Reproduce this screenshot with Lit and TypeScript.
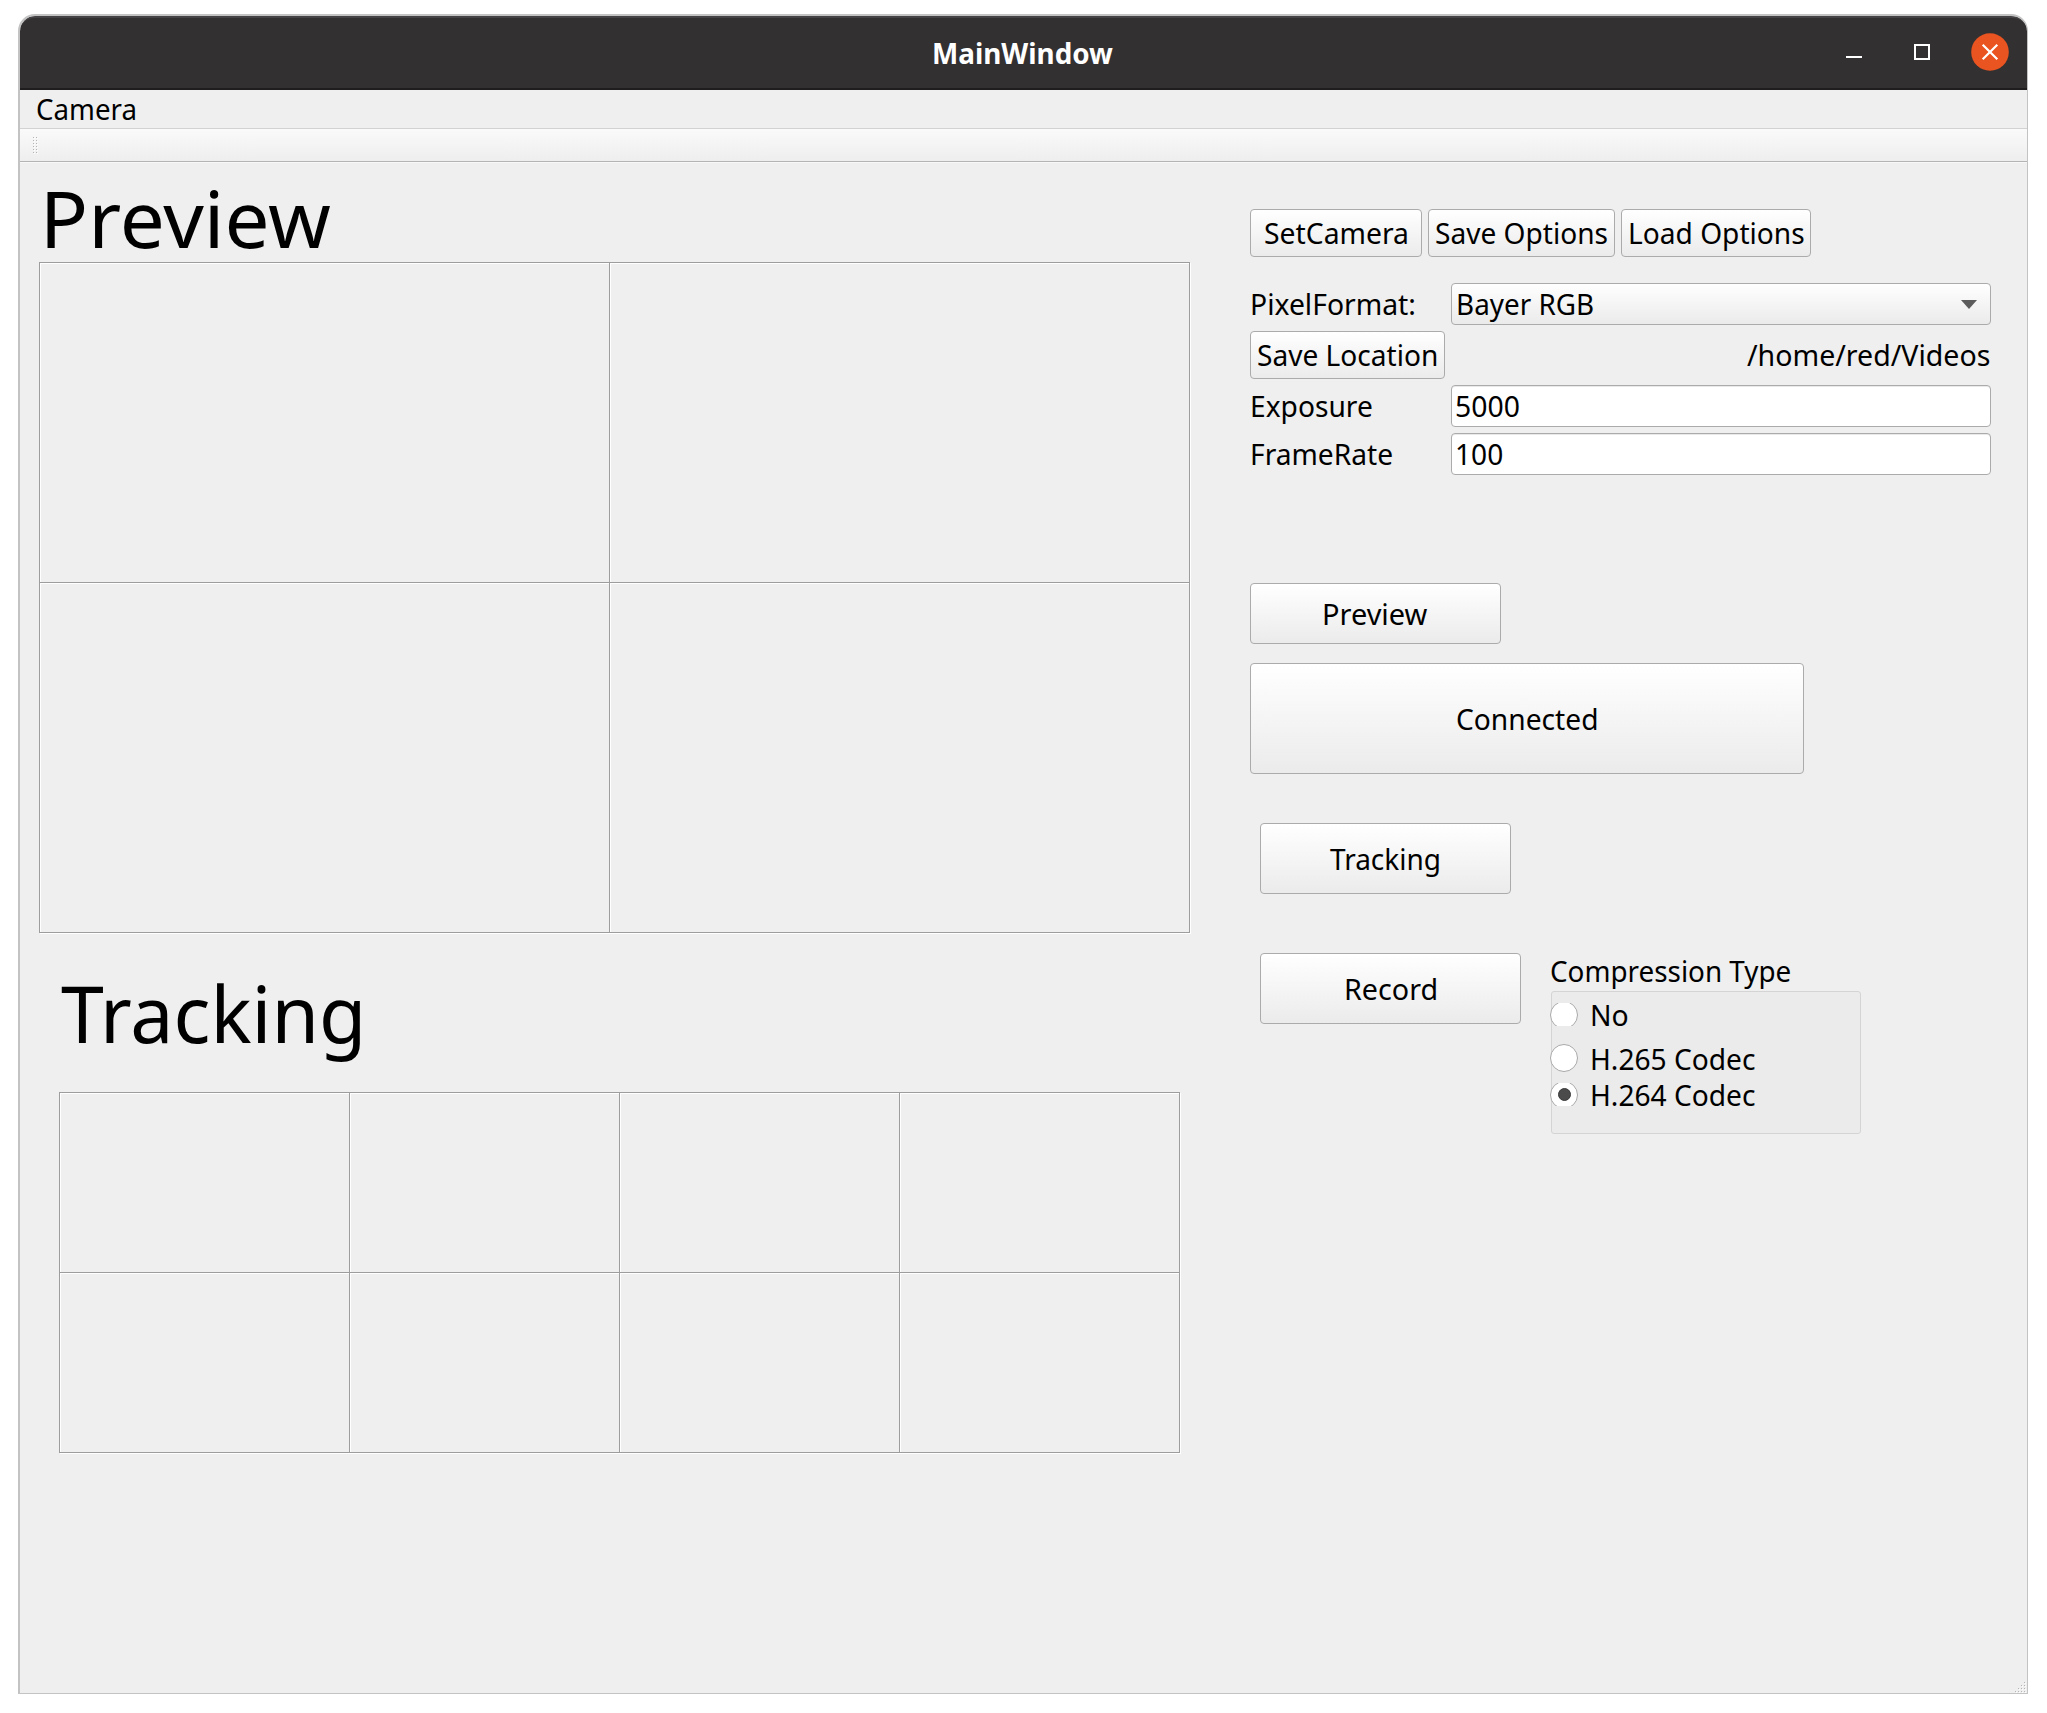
import { LitElement, html, css, svg } from "lit";
import { customElement, property } from "lit/decorators.js";
import { styleMap } from "lit/directives/style-map.js";

const FAMILY = '"Noto Sans", "Open Sans", sans-serif';
const pen = document.createElement("canvas").getContext("2d")!;

/** A single line of text whose inked area is condensed or widened to a given width. */
@customElement("fit-label")
class FitLabel extends LitElement {
  @property() text = "";
  @property({ type: Number }) ink = 0;
  @property({ type: Number }) size = 28.5;
  @property({ type: Number }) weight = 400;
  @property({ type: Number }) drop = 1;

  static styles = css`
    :host { display: inline-block; white-space: pre; flex: none; }
    .box { display: block; line-height: 1.3; font-family: "Noto Sans", "Open Sans", sans-serif; }
    .run { display: inline-block; transform-origin: 0 50%; }
  `;

  render() {
    pen.font = `${this.weight} ${this.size}px ${FAMILY}`;
    const m = pen.measureText(this.text);
    const scale = this.ink / (m.actualBoundingBoxRight + m.actualBoundingBoxLeft);
    const shift = m.actualBoundingBoxLeft * scale;
    return html`<span class="box" style=${styleMap({
      width: `${this.ink}px`,
      fontSize: `${this.size}px`,
      fontWeight: String(this.weight),
    })}><span class="run" style=${styleMap({
      transform: `translate(${shift}px, ${this.drop}px) scaleX(${scale})`,
    })}>${this.text}</span></span>`;
  }
}

const dots = (points: number[][]) =>
  points.map(([x, y]) => svg`<rect x=${x + 1} y=${y + 1} width="1" height="1" fill="#fff"/><rect x=${x} y=${y} width="1" height="1" fill="#b4b4b4"/>`);

const HANDLE = [0, 3, 6, 9, 12, 15].flatMap((y) => [[0, y], [3, y]]);
const GRIP = [[9, 0], [6, 3], [9, 3], [3, 6], [6, 6], [9, 6], [0, 9], [3, 9], [6, 9], [9, 9]];

@customElement("app-root")
class AppRoot extends LitElement {
  static styles = css`
    :host { display: block; box-sizing: border-box; width: 2047px; height: 1713px; padding: 14px 19px 19px 18px; background: #fff; color: #000; overflow: hidden; }
    * { box-sizing: border-box; }
    svg { display: block; flex: none; }
    .window { display: flex; flex-direction: column; height: 1680px; background: #efefef; border: solid #c3c3c3; border-width: 2px 1px 1px 2px; border-radius: 17px 17px 0 0; overflow: hidden; }
    .title { height: 74px; flex: none; display: grid; grid-template-columns: 1fr auto 1fr; align-items: center; background: #333031; border-top: 2px solid #444244; border-bottom: 2px solid #201d1f; color: #fff; border-radius: 15px 15px 0 0; }
    .name { grid-column: 2; padding-top: 1px; }
    .controls { display: flex; justify-content: flex-end; align-items: center; height: 38px; padding-right: 18px; margin-bottom: 2px; }
    .menu { height: 38px; flex: none; display: flex; align-items: center; padding-left: 17px; }
    .toolbar { height: 34px; flex: none; border-top: 1px solid #d2d2d2; border-bottom: 1px solid #b4b4b4; background: linear-gradient(#fafafa, #eee); padding: 8px 0 0 13px; }
    .body { flex: 1; min-height: 0; display: grid; grid-template-columns: 1230px 1fr; box-shadow: inset 0 1px #f8f8f8; }
    .left { padding-left: 19px; }
    .heading { display: flex; align-items: center; height: 100px; }
    .heading.one { margin: 5.5px 0 -5.5px 0; padding-left: 7.5px; }
    .heading.two { margin-top: 30px; height: 100px; padding-left: 22px; }
    .views { display: grid; width: max-content; border: solid #9d9d9d; border-width: 0 1px 1px 0; box-shadow: 1px 1px #fff; }
    .cell { border: solid #9d9d9d; border-width: 1px 0 0 1px; box-shadow: inset 1px 1px #fff; }
    .views.preview { grid-template: 320px 350px / 570px 580px; }
    .views.tracking { grid-template: 180px 180px / 290px 270px 280px 280px; margin: 29px 0 0 20px; }
    .right { padding-top: 47px; display: flex; flex-direction: column; align-items: flex-start; }
    .row { display: flex; gap: 6px; }
    .btn { appearance: none; margin: 0; padding: 0; height: 48px; flex: none; display: flex; align-items: center; justify-content: center; border: 1px solid #ababab; border-radius: 4px; background: linear-gradient(#fff, #ebebeb); color: #000; }
    .w172 { width: 172px; }
    .w187 { width: 187px; }
    .w190 { width: 190px; padding-left: 1px; }
    .w195 { width: 195px; }
    .form { display: grid; grid-template: 42px 48px 42px 42px / 195px 540px; gap: 6px; align-items: center; margin-top: 26px; }
    .lbl { padding-left: 2px; display: flex; }
    .path { display: flex; justify-content: flex-end; padding-right: 1px; }
    .field { height: 42px; display: flex; align-items: center; border: 1px solid #ababab; border-radius: 4px; background: #fff; padding-left: 4px; box-shadow: inset 0 1px #e9e9e9; }
    .field.rate { padding-left: 5px; }
    .combo { justify-content: space-between; background: linear-gradient(#fff, #ebebeb); padding: 0 13px 0 6px; box-shadow: none; }
    .go { width: 251px; height: 61px; margin-top: 108px; }
    .state { width: 554px; height: 111px; margin-top: 19px; }
    .track { width: 251px; height: 71px; margin: 49px 0 0 10px; padding-right: 1px; }
    .bottom { display: flex; margin: 59px 0 0 10px; }
    .rec { width: 261px; height: 71px; padding-left: 1px; }
    .codec { margin-left: 30px; }
    .caption { display: flex; align-items: center; height: 38px; }
    .frame { width: 310px; height: 143px; border: 1px solid #d4d4d4; border-radius: 3px; background: #ebebeb; padding-top: 11px; }
    .opt { display: flex; align-items: center; gap: 14px; height: 23px; margin-left: -2px; }
    .opt + .opt { margin-top: 21px; }
    .opt + .opt.third { margin-top: 13px; }
    .opt .slot { width: 28px; height: 23px; flex: none; display: flex; align-items: center; overflow: hidden; }
    .opt .slot.full { height: 28px; margin-bottom: 1px; }
    .radio { width: 28px; height: 28px; flex: none; border-radius: 50%; border: 1px solid #a8a8a8; background: #fff; display: grid; place-items: center; }
    .dot { width: 13px; height: 13px; border-radius: 50%; background: #4b4b4b; border: 1px solid #3a3a3a; }
    .gripbar { height: 0; display: flex; justify-content: flex-end; align-items: flex-end; padding-right: 1px; margin-top: -1px; }
  `;

  render() {
    const cells = (n: number) => Array.from({ length: n }, () => html`<div class="cell"></div>`);
    return html`
      <div class="window">
        <header class="title">
          <div class="name"><fit-label text="MainWindow" ink="179.5" weight="700" drop="0"></fit-label></div>
          <div class="controls">
            <svg width="178" height="38" viewBox="0 0 178 38">
              <rect x="15" y="23" width="16" height="2" fill="#fff"/>
              <rect x="84" y="12" width="14" height="14" fill="none" stroke="#fff" stroke-width="2"/>
              <circle cx="159" cy="19" r="18.8" fill="#e95420"/>
              <path d="M151.7 11.7 L166.3 26.3 M166.3 11.7 L151.7 26.3" stroke="#fff" stroke-width="2.2"/>
            </svg>
          </div>
        </header>
        <nav class="menu"><fit-label text="Camera" ink="98"></fit-label></nav>
        <div class="toolbar"><svg width="5" height="17">${dots(HANDLE)}</svg></div>
        <main class="body">
          <section class="left">
            <div class="heading one"><fit-label text="Preview" ink="283.5" size="78"></fit-label></div>
            <div class="views preview">${cells(4)}</div>
            <div class="heading two"><fit-label text="Tracking" ink="299.5" size="78"></fit-label></div>
            <div class="views tracking">${cells(8)}</div>
          </section>
          <section class="right">
            <div class="row">
              <button class="btn w172"><fit-label text="SetCamera" ink="142"></fit-label></button>
              <button class="btn w187"><fit-label text="Save Options" ink="171.3"></fit-label></button>
              <button class="btn w190"><fit-label text="Load Options" ink="174"></fit-label></button>
            </div>
            <div class="form">
              <div class="lbl"><fit-label text="PixelFormat:" ink="162.3"></fit-label></div>
              <div class="field combo">
                <fit-label text="Bayer RGB" ink="134.6"></fit-label>
                <svg width="16" height="9"><path d="M0 0H16L8 9Z" fill="#5c5c5c"/></svg>
              </div>
              <button class="btn w195"><fit-label text="Save Location" ink="178.7"></fit-label></button>
              <div class="path"><fit-label text="/home/red/Videos" ink="242.7"></fit-label></div>
              <div class="lbl"><fit-label text="Exposure" ink="119.7"></fit-label></div>
              <div class="field"><fit-label text="5000" ink="62.6"></fit-label></div>
              <div class="lbl"><fit-label text="FrameRate" ink="140"></fit-label></div>
              <div class="field rate"><fit-label text="100" ink="45"></fit-label></div>
            </div>
            <button class="btn go"><fit-label text="Preview" ink="104"></fit-label></button>
            <button class="btn state"><fit-label text="Connected" ink="140"></fit-label></button>
            <button class="btn track"><fit-label text="Tracking" ink="109.5"></fit-label></button>
            <div class="bottom">
              <button class="btn rec"><fit-label text="Record" ink="90.5"></fit-label></button>
              <div class="codec">
                <div class="caption"><fit-label text="Compression Type" ink="239.2" drop="0"></fit-label></div>
                <div class="frame">
                  <div class="opt"><span class="slot"><span class="radio"></span></span><fit-label text="No" ink="35.5"></fit-label></div>
                  <div class="opt"><span class="slot full"><span class="radio"></span></span><fit-label text="H.265 Codec" ink="162.8"></fit-label></div>
                  <div class="opt third"><span class="slot"><span class="radio"><span class="dot"></span></span></span><fit-label text="H.264 Codec" ink="162.8"></fit-label></div>
                </div>
              </div>
            </div>
          </section>
        </main>
        <div class="gripbar"><svg width="11" height="11">${dots(GRIP)}</svg></div>
      </div>
    `;
  }
}
